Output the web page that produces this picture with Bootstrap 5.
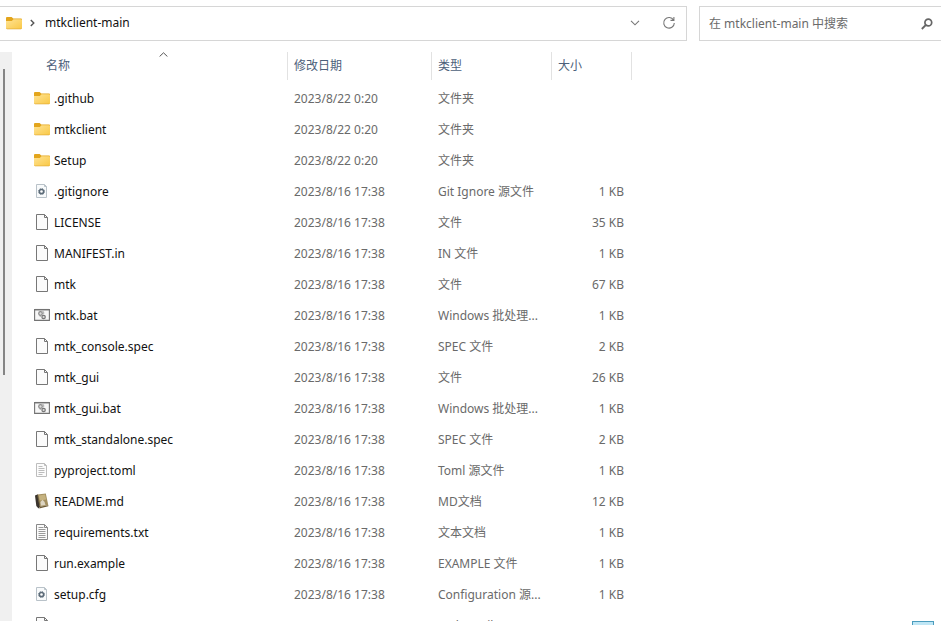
<!DOCTYPE html>
<html lang="zh-CN">
<head>
<meta charset="utf-8">
<meta name="viewport" content="width=device-width, initial-scale=1">
<title>mtkclient-main</title>
<link rel="stylesheet" href="https://cdn.jsdelivr.net/npm/bootstrap@5.3.0/dist/css/bootstrap.min.css">
<style>
  body { font-family: "Noto Sans", "Noto Sans CJK SC", sans-serif; font-size: 12px; line-height: 18px; color: #000; background: #fff; }
  svg { display: block; flex: none; }
  .top-bar { padding-top: 6px; gap: 12px; }
  .field-box { height: 35px; border: 1px solid #d6d6d6; }
  .address { border-left: 0; padding: 0 8px 2px 6px; }
  .search { width: 242px; border-right: 0; padding: 0 8px 0 9px; }
  .search input { font-size: 12px; line-height: 18px; color: #666; outline: 0; }
  .search input::placeholder { color: #6a6a6a; opacity: 1; }
  .path { gap: 8px; }
  .path a { color: #111; margin-left: 2px; }
  .tool { width: 18px; height: 18px; }
  .pane { margin-top: 11px; }
  .scroller { width: 12px; background: #f0f0f0; padding: 17px 0 0 3px; }
  .thumb { width: 2px; height: 55.5%; background: #858585; }
  .files { width: 620px; table-layout: fixed; border-collapse: separate; border-spacing: 0; }
  .files th { height: 31px; padding: 0 0 0 6px; font-weight: 400; color: #4c607a; vertical-align: top; position: relative; }
  .files th span { display: block; height: 28px; padding-top: 5px; }
  .files th .head { margin-left: -6px; padding-left: 6px; border-left: 1px solid #e2e2e2; }
  .files th:first-child { padding-left: 34px; }
  .files th:last-child span { margin-left: -6px; border-left: 1px solid #e2e2e2; }
  .files .sort { position: absolute; left: 147px; top: 0; }
  .files td { height: 31px; padding: 0 0 0 7px; color: #6a6a6a; white-space: nowrap; overflow: hidden; text-overflow: ellipsis; vertical-align: middle; }
  .files td:first-child { padding-left: 22px; color: #111; }
  .files td:nth-child(4) { padding: 0 7px 0 0; text-align: right; }
  .entry { gap: 4px; }
  .entry svg { margin-bottom: 2px; }
  .c-name { width: 275px; } .c-date { width: 144px; } .c-type { width: 120px; } .c-size { width: 80px; } .c-end { width: 1px; }
  .status { height: 4px; padding-right: 7px; }
  .view-btn { width: 22px; height: 20px; background: #bfe6f5; border: 1px solid #4b9cbd; }
</style>
<script src="https://cdn.jsdelivr.net/npm/bootstrap@5.3.0/dist/js/bootstrap.bundle.min.js"></script>
</head>
<body>
<svg width="0" height="0" class="position-absolute" aria-hidden="true">
  <defs>
    <linearGradient id="gold" x1="0" y1="0" x2="1" y2="1"><stop offset="0" stop-color="#ffe394"/><stop offset="1" stop-color="#f9c846"/></linearGradient>
    <symbol id="folder" viewBox="0 0 16 16">
      <path d="M0 3a1 1 0 0 1 1-1h4.6l1.7 1.6H15a1 1 0 0 1 1 1V8H0z" fill="#e3a51c"/>
      <path d="M0 6h5.8l1.7-1.7H15a1 1 0 0 1 1 1V13a1 1 0 0 1-1 1H1a1 1 0 0 1-1-1z" fill="url(#gold)"/>
      <path d="M.3 13.3q.3.6.9.6h13.6q.6 0 .9-.6" fill="none" stroke="#e2ad38" stroke-width=".7"/>
    </symbol>
    <symbol id="blank" viewBox="0 0 16 16">
      <path d="M2.5.5h8l3 3v12h-11z" fill="#fbfbfb" stroke="#777"/><path d="M10.5.5v3h3" fill="none" stroke="#777"/>
    </symbol>
    <symbol id="gear" viewBox="0 0 16 16">
      <path d="M2.5 1.5h8l2 2v11h-10z" fill="#f8fafb" stroke="#b9c2c9"/><path d="M10.5 1.5v2h2" fill="none" stroke="#b9c2c9"/>
      <circle cx="7.5" cy="8.5" r="3" fill="none" stroke="#6a7986" stroke-width="1" stroke-dasharray="1.2 1.15"/>
      <circle cx="7.5" cy="8.5" r="2.1" fill="#fff" stroke="#5c6b78" stroke-width="1.5"/>
    </symbol>
    <symbol id="batch" viewBox="0 0 16 16">
      <path d="M.6 2.5h14.8v10.9H.6z" fill="#f7f7f7" stroke="#737373" stroke-width="1.1"/><path d="M.5 2.7h15" stroke="#737373" stroke-width="1.5"/>
      <circle cx="6.5" cy="6.5" r="1.8" fill="#ddd" stroke="#888" stroke-width="1.2"/><circle cx="9.6" cy="10" r="1.7" fill="#ddd" stroke="#777" stroke-width="1.2"/>
      <path d="M8.2 4.8h1.5v2.5M5 8.5l2 1" fill="none" stroke="#999" stroke-width=".8"/>
    </symbol>
    <symbol id="toml" viewBox="0 0 16 16">
      <path d="M2.5 1.5h8l2 2v11h-10z" fill="#fcfcfc" stroke="#bdbdbd"/><path d="M10.5 1.5v2h2" fill="none" stroke="#bdbdbd"/>
      <path d="M4.5 4.5h4M4.5 6.5h6M4.5 8.5h6M4.5 10.5h6M4.5 12.5h4" stroke="#bcbcbc"/>
    </symbol>
    <symbol id="text" viewBox="0 0 16 16">
      <path d="M2.5.5h8l3 3v12h-11z" fill="#fbfbfb" stroke="#898989"/><path d="M10.5.5v3h3" fill="none" stroke="#898989"/>
      <path d="M4.5 3.5h5M4.5 5.5h7M4.5 7.5h7M4.5 9.5h7M4.5 11.5h7M4.5 13.5h7" stroke="#9a9a9a"/>
    </symbol>
    <symbol id="book" viewBox="0 0 16 16">
      <path d="M1 2.4 4 1.2l2.3 12-1.8 2.3L2.3 13z" fill="#39332c"/>
      <path d="M3.6 1.6 11.8.5l2.5 11.8-8.6 1.5z" fill="#a38f60"/><path d="M4.9 2.4 11 1.5l1.2 5-6.4 1z" fill="#c5b27f"/>
      <path d="M5.7 13.8l8.6-1.5v1L5.2 15.4z" fill="#6d5a36"/>
      <path d="M6.8 12.8 6.4 9l2.2-2.3 2 2.2.9 3.2z" fill="#ddd5c2"/><path d="M3.8 3 5.7 12" stroke="#6b5b3a" stroke-width=".9"/>
    </symbol>
  </defs>
</svg>

<div class="d-flex flex-column vh-100 overflow-hidden">
  <header class="top-bar d-flex">
    <div class="field-box address d-flex align-items-center flex-grow-1">
      <nav class="path d-flex align-items-center flex-grow-1" aria-label="路径">
        <svg width="16" height="16"><use href="#folder"/></svg>
        <svg width="5" height="8" viewBox="0 0 5 8"><path d="M.8 1l3 3-3 3" fill="none" stroke="#555" stroke-width="1.4"/></svg>
        <a href="#" class="text-decoration-none">mtkclient-main</a>
      </nav>
      <button type="button" class="tool btn p-0 border-0 d-flex align-items-center justify-content-center me-3" aria-label="历史记录"><svg width="10" height="6" viewBox="0 0 10 6"><path d="M1 .8l4 4 4-4" fill="none" stroke="#777" stroke-width="1.1"/></svg></button>
      <button type="button" class="tool btn p-0 border-0 d-flex align-items-center justify-content-center" aria-label="刷新"><svg width="14" height="14" viewBox="0 0 14 14"><path d="M11.6 4.2A5.3 5.3 0 1 0 12.3 7M11.9 1v3.4H8.5" fill="none" stroke="#777" stroke-width="1.1"/></svg></button>
    </div>
    <div class="field-box search d-flex align-items-center">
      <input type="search" class="border-0 p-0 flex-grow-1 bg-transparent" aria-label="搜索" placeholder="在 mtkclient-main 中搜索">
      <svg width="12" height="12" viewBox="0 0 12 12"><circle cx="7.3" cy="4.5" r="3.4" fill="none" stroke="#666" stroke-width="1.7"/><path d="M4.8 7 .8 11" stroke="#666" stroke-width="1.8"/></svg>
    </div>
  </header>

  <main class="pane d-flex flex-grow-1 overflow-hidden">
    <div class="scroller"><div class="thumb"></div></div>
    <div class="flex-grow-1 overflow-hidden">
      <table class="files">
        <colgroup><col class="c-name"><col class="c-date"><col class="c-type"><col class="c-size"><col class="c-end"></colgroup>
        <thead>
          <tr>
            <th scope="col"><span>名称</span><svg class="sort" width="9" height="5" viewBox="0 0 9 5"><path d="M.6 4.5 4.5.8l3.9 3.7" fill="none" stroke="#555"/></svg></th>
            <th scope="col"><span class="head">修改日期</span></th>
            <th scope="col"><span class="head">类型</span></th>
            <th scope="col"><span class="head">大小</span></th>
            <th><span></span></th>
          </tr>
        </thead>
        <tbody>
          <tr><td><div class="entry d-flex align-items-center"><svg width="16" height="16"><use href="#folder"/></svg>.github</div></td><td>2023/8/22 0:20</td><td>文件夹</td><td></td></tr>
          <tr><td><div class="entry d-flex align-items-center"><svg width="16" height="16"><use href="#folder"/></svg>mtkclient</div></td><td>2023/8/22 0:20</td><td>文件夹</td><td></td></tr>
          <tr><td><div class="entry d-flex align-items-center"><svg width="16" height="16"><use href="#folder"/></svg>Setup</div></td><td>2023/8/22 0:20</td><td>文件夹</td><td></td></tr>
          <tr><td><div class="entry d-flex align-items-center"><svg width="16" height="16"><use href="#gear"/></svg>.gitignore</div></td><td>2023/8/16 17:38</td><td>Git Ignore 源文件</td><td>1 KB</td></tr>
          <tr><td><div class="entry d-flex align-items-center"><svg width="16" height="16"><use href="#blank"/></svg>LICENSE</div></td><td>2023/8/16 17:38</td><td>文件</td><td>35 KB</td></tr>
          <tr><td><div class="entry d-flex align-items-center"><svg width="16" height="16"><use href="#blank"/></svg>MANIFEST.in</div></td><td>2023/8/16 17:38</td><td>IN 文件</td><td>1 KB</td></tr>
          <tr><td><div class="entry d-flex align-items-center"><svg width="16" height="16"><use href="#blank"/></svg>mtk</div></td><td>2023/8/16 17:38</td><td>文件</td><td>67 KB</td></tr>
          <tr><td><div class="entry d-flex align-items-center"><svg width="16" height="16"><use href="#batch"/></svg>mtk.bat</div></td><td>2023/8/16 17:38</td><td>Windows 批处理...</td><td>1 KB</td></tr>
          <tr><td><div class="entry d-flex align-items-center"><svg width="16" height="16"><use href="#blank"/></svg>mtk_console.spec</div></td><td>2023/8/16 17:38</td><td>SPEC 文件</td><td>2 KB</td></tr>
          <tr><td><div class="entry d-flex align-items-center"><svg width="16" height="16"><use href="#blank"/></svg>mtk_gui</div></td><td>2023/8/16 17:38</td><td>文件</td><td>26 KB</td></tr>
          <tr><td><div class="entry d-flex align-items-center"><svg width="16" height="16"><use href="#batch"/></svg>mtk_gui.bat</div></td><td>2023/8/16 17:38</td><td>Windows 批处理...</td><td>1 KB</td></tr>
          <tr><td><div class="entry d-flex align-items-center"><svg width="16" height="16"><use href="#blank"/></svg>mtk_standalone.spec</div></td><td>2023/8/16 17:38</td><td>SPEC 文件</td><td>2 KB</td></tr>
          <tr><td><div class="entry d-flex align-items-center"><svg width="16" height="16"><use href="#toml"/></svg>pyproject.toml</div></td><td>2023/8/16 17:38</td><td>Toml 源文件</td><td>1 KB</td></tr>
          <tr><td><div class="entry d-flex align-items-center"><svg width="16" height="16"><use href="#book"/></svg>README.md</div></td><td>2023/8/16 17:38</td><td>MD文档</td><td>12 KB</td></tr>
          <tr><td><div class="entry d-flex align-items-center"><svg width="16" height="16"><use href="#text"/></svg>requirements.txt</div></td><td>2023/8/16 17:38</td><td>文本文档</td><td>1 KB</td></tr>
          <tr><td><div class="entry d-flex align-items-center"><svg width="16" height="16"><use href="#blank"/></svg>run.example</div></td><td>2023/8/16 17:38</td><td>EXAMPLE 文件</td><td>1 KB</td></tr>
          <tr><td><div class="entry d-flex align-items-center"><svg width="16" height="16"><use href="#gear"/></svg>setup.cfg</div></td><td>2023/8/16 17:38</td><td>Configuration 源...</td><td>1 KB</td></tr>
          <tr><td><div class="entry d-flex align-items-center"><svg width="16" height="16"><use href="#blank"/></svg>setup.py</div></td><td>2023/8/16 17:38</td><td>Python File</td><td>2 KB</td></tr>
        </tbody>
      </table>
    </div>
  </main>

  <footer class="status d-flex justify-content-end overflow-hidden flex-shrink-0">
    <button type="button" class="view-btn p-0" aria-label="详细信息"></button>
  </footer>
</div>
</body>
</html>
